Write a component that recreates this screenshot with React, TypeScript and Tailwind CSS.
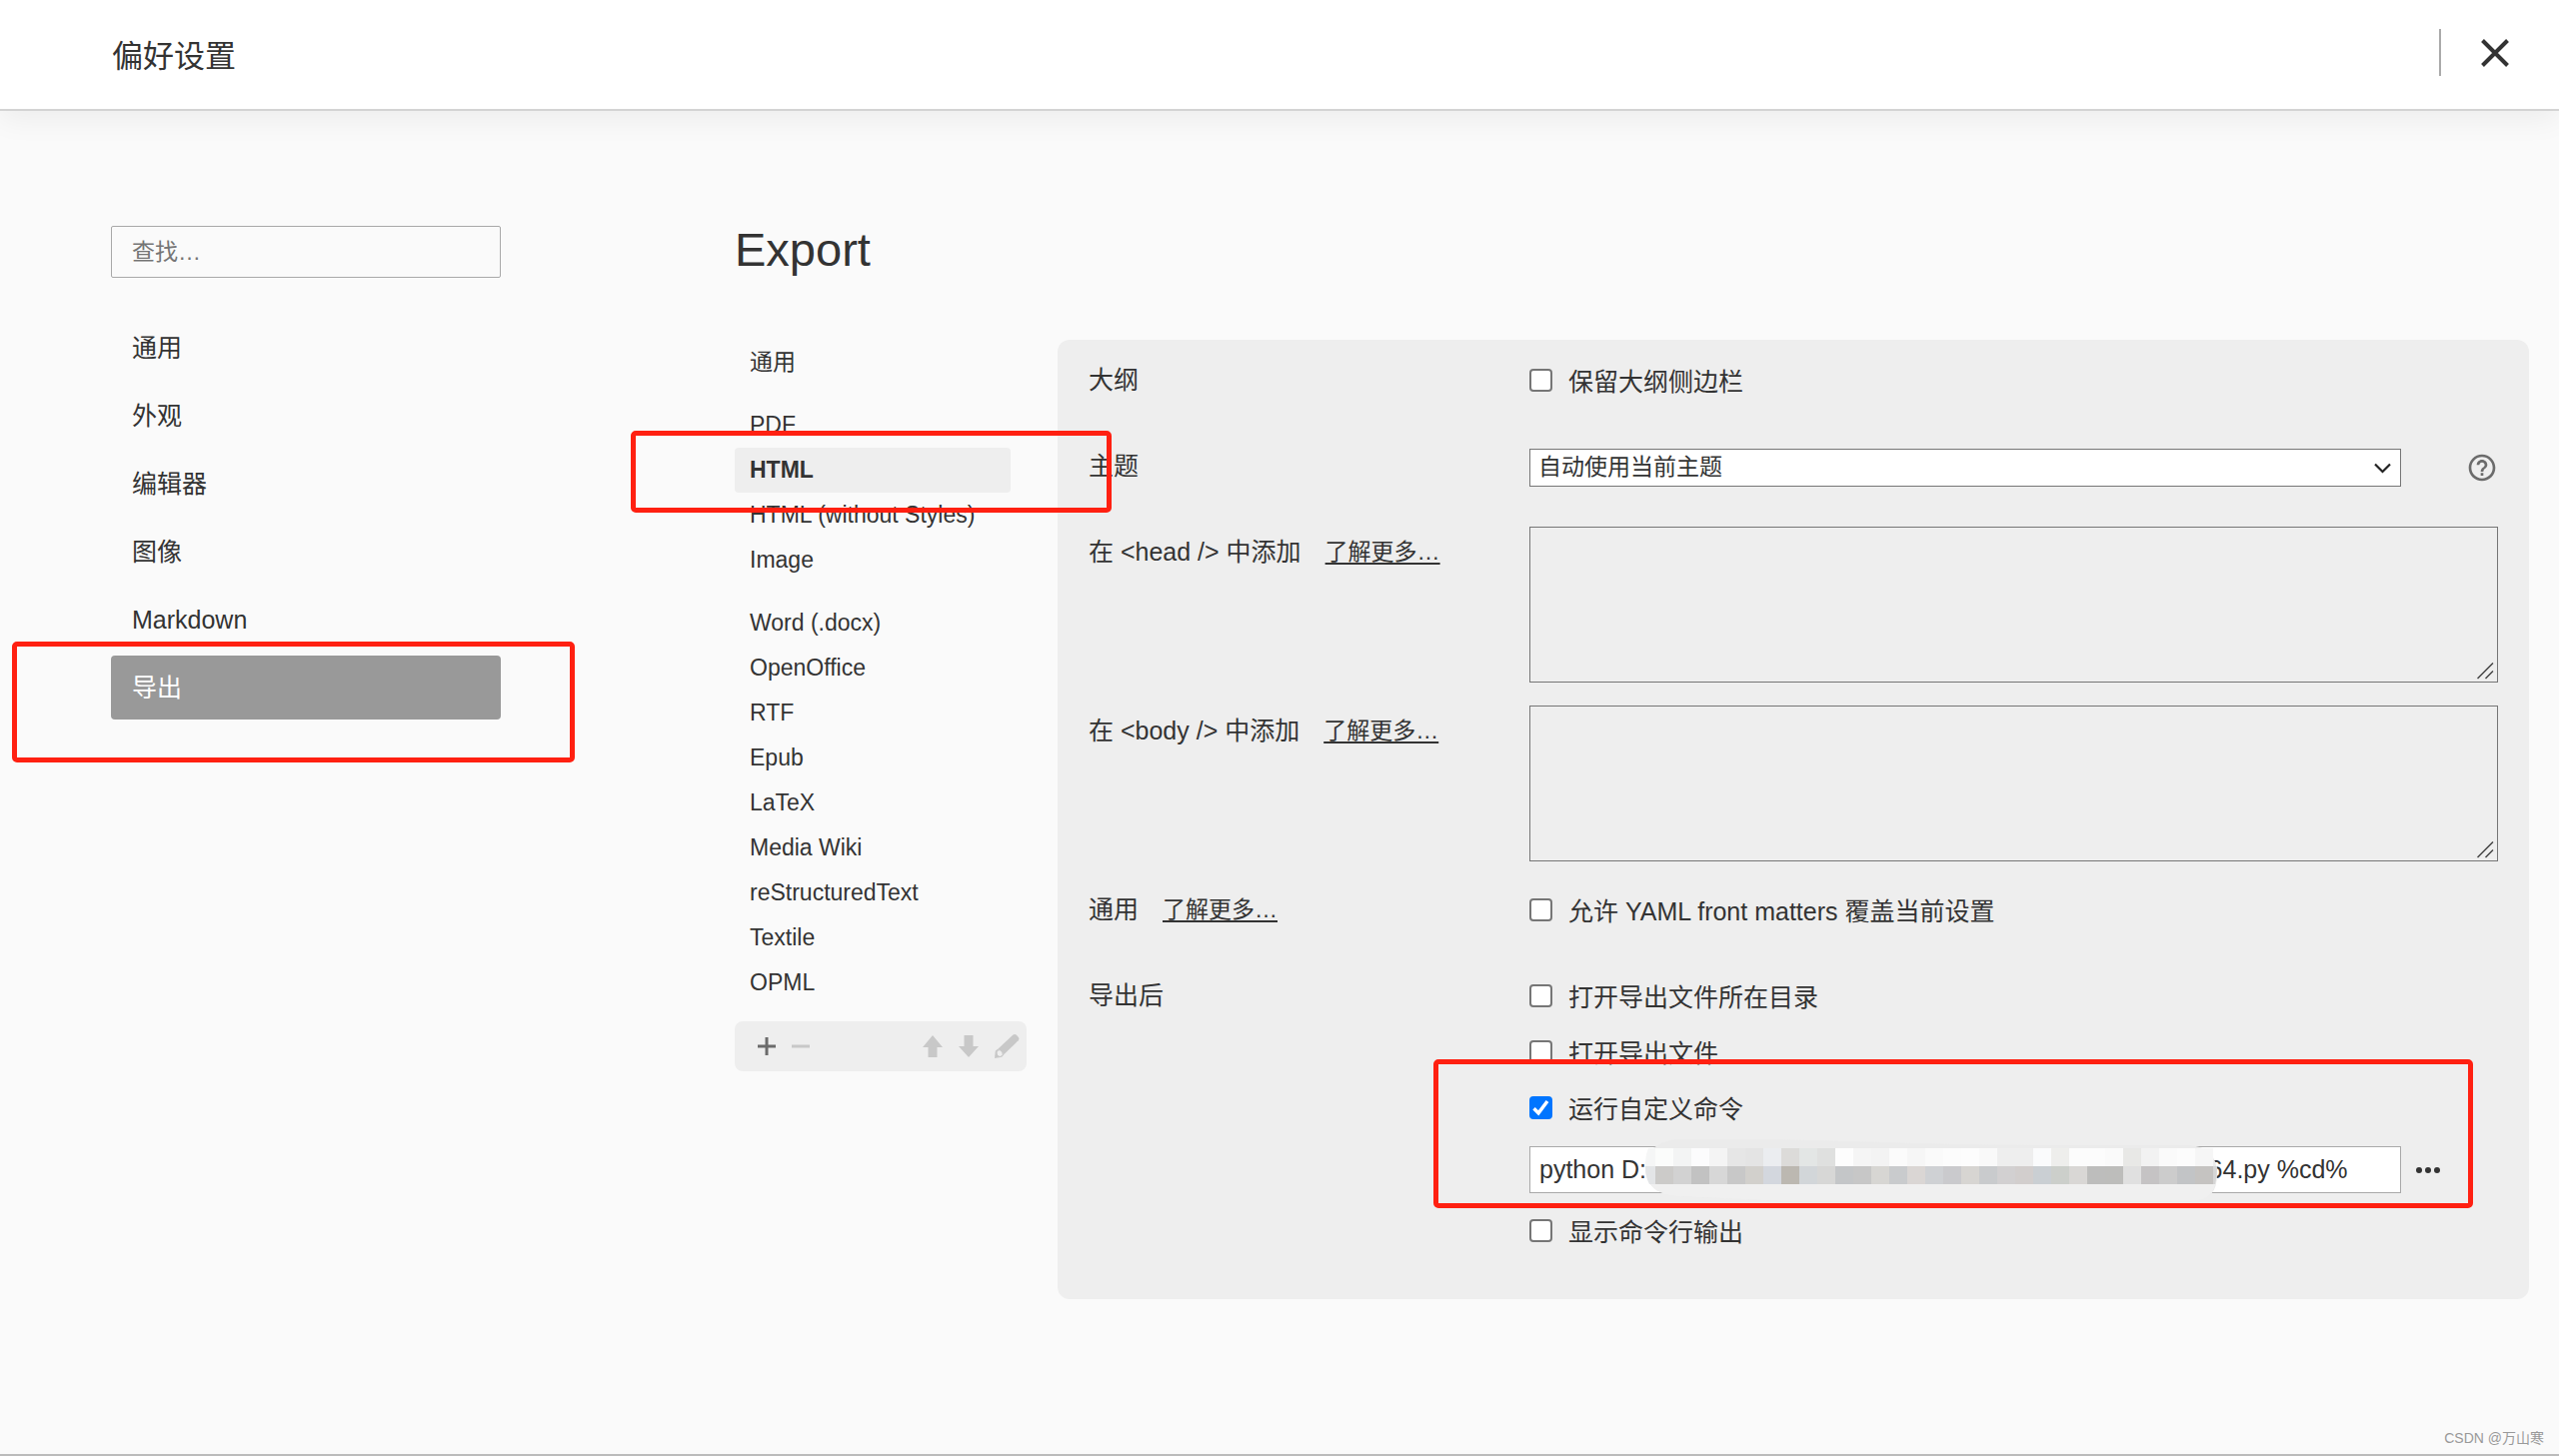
import React, { useState } from 'react';
import { MdHelpOutline } from 'react-icons/md';

const MENU = ['通用', '外观', '编辑器', '图像', 'Markdown', '导出'];

const EXPORT_GROUPS = [
    ['通用'],
    ['PDF', 'HTML', 'HTML (without Styles)', 'Image'],
    ['Word (.docx)', 'OpenOffice', 'RTF', 'Epub', 'LaTeX', 'Media Wiki', 'reStructuredText', 'Textile', 'OPML'],
];

// Colours of the mosaic that hides the middle of the command
const MOSAIC = [
    ['#fbfcfb', '#f3f4f4', '#fcfcfd', '#f4f4f4', '#e6e6e6', '#e4e4e4', '#ebedf0', '#dcdbd9', '#e3e6e5', '#dfe0df', '#fdfdfd', '#f5f5f5', '#f3f3f3', '#fbfbfb', '#f6f6f6', '#fafafa', '#fcfcfc', '#fdfdfd', '#f9f9f9', '#eeeeee', '#eeeeee', '#fafbfc', '#eeeeec', '#fcfcfc', '#fcfcfc', '#fafafa', '#e8e8e6', '#f2f2f2', '#fafafa', '#fcfcfc', '#f6f6f6'],
    ['#cccbc9', '#d2d2d2', '#c2c2c2', '#d7d7d7', '#c8c8c8', '#d2d0cc', '#d3d7de', '#bcb8b1', '#d2d6d9', '#d7d7d6', '#c4c6c8', '#c7c7c7', '#d7d6d3', '#c9cbcd', '#dad6d4', '#cfd1d4', '#cacacd', '#d7d5d2', '#c9cbcd', '#d2d0d1', '#d2cecd', '#cacfd3', '#cccfcb', '#d9d7d5', '#bdbdbc', '#bdbdbb', '#e0e0e0', '#c5c3c4', '#cccccc', '#c2c4c6', '#c5c3c1'],
];

const COMMAND = 'python D:' + ' '.repeat(81) + '64.py %cd%';

const Highlight: React.FC<{ className: string }> = ({ className }) => (
    <div className={`absolute z-10 border-5 border-[#ff2011] rounded-[5px] pointer-events-none ${className}`} />
);

const Row: React.FC<{ label: string; link?: boolean; children: React.ReactNode }> = ({ label, link, children }) => (
    <div className="flex min-h-[86px] pt-[15px]">
        <div className="flex items-center gap-6 w-[441px] h-[38px] mt-1.5 shrink-0 whitespace-nowrap">
            <span>{label}</span>
            {link && <a href="#more" className="text-[23px] underline decoration-2 underline-offset-3">了解更多…</a>}
        </div>
        <div className="flex-1 min-w-0">{children}</div>
    </div>
);

const Check: React.FC<{ label: string; defaultChecked?: boolean }> = ({ label, defaultChecked }) => (
    <label className="flex items-center gap-4 h-[38px] w-fit">
        <input type="checkbox" defaultChecked={defaultChecked} className="peer sr-only" />
        <span className="flex items-center justify-center w-[23px] h-[23px] bg-white border-2 border-[#767676] rounded-[4px] text-transparent peer-checked:bg-[#0075ff] peer-checked:border-[#0075ff] peer-checked:text-white">
            <svg width="19" height="19" viewBox="0 0 19 19" fill="none" stroke="currentColor" strokeWidth="3.4">
                <path d="M2.5 10.2l4.6 4.6L16 3" />
            </svg>
        </span>
        <span className="mt-1">{label}</span>
    </label>
);

const Area: React.FC<{ label: string }> = ({ label }) => (
    <div className="relative pb-2">
        <textarea aria-label={label} className="block w-full h-[156px] bg-transparent border border-[#767676] resize-none p-2 outline-none" />
        <svg className="absolute right-1 bottom-[11px]" width="17" height="17" viewBox="0 0 17 17" stroke="#444" strokeWidth="1.5">
            <path d="M0.5 16L16 0.5M8.5 16L16 8.5" />
        </svg>
    </div>
);

const ExportToolbar = () => (
    <div className="flex items-center h-[50px] mt-4 pl-[21px] pr-[7px] bg-[#eee] rounded-lg text-[#c8c8c8]">
        <button aria-label="Add" className="text-[#6b6b6b]">
            <svg width="22" height="22" viewBox="0 0 22 22" stroke="currentColor" strokeWidth="3"><path d="M2 11h18M11 2v18" /></svg>
        </button>
        <button aria-label="Remove" className="ml-3">
            <svg width="22" height="22" viewBox="0 0 22 22" stroke="currentColor" strokeWidth="3"><path d="M2 11h18" /></svg>
        </button>
        <button aria-label="Move up" className="ml-auto">
            <svg width="22" height="22" viewBox="0 0 22 22" fill="currentColor"><path d="M11 0L21 12H15.500V22H6.500V12H1z" /></svg>
        </button>
        <button aria-label="Move down" className="ml-[14px]">
            <svg width="22" height="22" viewBox="0 0 22 22" fill="currentColor"><path d="M11 22L21 11H15.500V0H6.500V11H1z" /></svg>
        </button>
        <button aria-label="Edit" className="ml-[14px]">
            <svg width="26" height="26" viewBox="0 0 26 26" fill="currentColor">
                <path d="M19.500 1.500q1.800-1.300 3.400.2l2 2.300q1.100 1.700-.2 3.200L10.500 21 4.500 15.500z" />
                <path d="M1.800 17.500L4.500 15.500 10.500 21 8.200 23.800 1 25z" />
                <path d="M3.600 18.600Q5.500 16 7.200 18T8.600 21.300Q7.500 23.300 5.500 22.800T3.600 18.600z" fill="#eee" />
            </svg>
        </button>
    </div>
);

const Mosaic = () => (
    <svg className="absolute left-[115px] -top-[7px] pointer-events-none" width="574" height="62" viewBox="0 0 574 62">
        <path d="M34 0H120C220 2 300 6 400 6H545Q573 8 573 35Q573 48 567 55Q558 62 545 62H140L34 57Q1 54 1 29Q1 3 34 0z" fill="#ebebeb" />
        <path d="M6 45H571Q568 62 545 62H140L34 57Q12 55 6 45z" fill="#f0f0f0" />
        <path d="M4 9H11V27H1Q1 16 4 9z" fill="#f5f6f6" />
        <path d="M1 27H11V45H5Q1 37 1 27z" fill="#e3e5e7" />
        {MOSAIC.map((row, y) => row.map((fill, x) => (
            <rect key={`${x}-${y}`} x={11 + x * 18} y={9 + y * 18} width="18" height="18" fill={fill} shapeRendering="crispEdges" />
        )))}
        <path d="M569 27h4q0 10-2 18h-2z" fill="#d6d6d6" />
    </svg>
);

const Sidebar: React.FC<{ active: string; onSelect: (name: string) => void }> = ({ active, onSelect }) => (
    <aside className="w-[390px] shrink-0">
        <input
            type="search"
            aria-label="查找"
            placeholder="查找…"
            className="block w-full h-[52px] px-5 text-[23px] bg-transparent border border-[#a9a9a9] rounded-[2px] outline-none placeholder:text-[#757575]"
        />
        <ul className="flex flex-col gap-1 mt-[38px]">
            {MENU.map(name => (
                <li key={name} className="relative">
                    <button
                        onClick={() => onSelect(name)}
                        className={`flex items-center w-full h-16 px-[21px] rounded-[4px] ${active === name ? 'bg-[#999] text-white' : ''}`}
                    >
                        {name}
                    </button>
                    {name === '导出' && <Highlight className="-left-[99px] -right-[74px] -top-[14px] -bottom-[43px]" />}
                </li>
            ))}
        </ul>
    </aside>
);

const ExportList = () => {
    const [format, setFormat] = useState('HTML');

    return (
        <div className="w-[292px] shrink-0 text-[23px]">
            <div className="flex flex-col gap-[18px]">
                {EXPORT_GROUPS.map(group => (
                    <ul key={group[0]} className="w-[276px]">
                        {group.map(name => (
                            <li key={name} className="relative">
                                <button
                                    onClick={() => setFormat(name)}
                                    className={`flex items-center w-full h-[45px] px-[15px] pb-0.5 rounded-[4px] whitespace-nowrap ${format === name ? 'bg-[#eee] font-bold' : ''}`}
                                >
                                    {name}
                                </button>
                                {name === 'HTML' && <Highlight className="-left-[104px] -right-[101px] -top-[17px] -bottom-5" />}
                            </li>
                        ))}
                    </ul>
                ))}
            </div>
            <ExportToolbar />
        </div>
    );
};

const HtmlOptions = () => (
    <section className="flex-1 min-w-0 px-[31px] pb-[50px] bg-[#eee] rounded-[12px]">
        <Row label="大纲">
            <div className="pt-1.5"><Check label="保留大纲侧边栏" /></div>
        </Row>
        <Row label="主题">
            <div className="flex items-center pt-2">
                <div className="relative flex-1">
                    <select aria-label="主题" className="block w-full h-[38px] pl-2 pb-0.5 text-[23px] leading-[34px] bg-white border border-[#767676] appearance-none outline-none">
                        <option>自动使用当前主题</option>
                    </select>
                    <svg className="absolute right-[10px] top-[14px] pointer-events-none" width="17" height="12" viewBox="0 0 17 12" fill="none" stroke="#222" strokeWidth="2.2">
                        <path d="M1 1.500l7.500 7.500L16 1.500" />
                    </svg>
                </div>
                <button aria-label="Help" className="w-[97px] flex justify-end text-[#6b6b6b]">
                    <MdHelpOutline size={32} />
                </button>
            </div>
        </Row>
        <Row label="在 <head /> 中添加" link><Area label="head" /></Row>
        <Row label="在 <body /> 中添加" link><Area label="body" /></Row>
        <Row label="通用" link>
            <div className="pt-1.5"><Check label="允许 YAML front matters 覆盖当前设置" /></div>
        </Row>
        <Row label="导出后">
            <div className="flex flex-col gap-[18px] pt-1.5">
                <Check label="打开导出文件所在目录" />
                <Check label="打开导出文件" />
                <div className="relative">
                    <Check label="运行自定义命令" defaultChecked />
                    <div className="relative flex items-center mt-5">
                        <input
                            type="text"
                            aria-label="运行自定义命令"
                            defaultValue={COMMAND}
                            className="flex-1 min-w-0 h-[47px] px-[9px] bg-white border border-[#a9a9a9] outline-none"
                        />
                        <button aria-label="More" className="w-[97px] pl-[15px]">
                            <svg width="24" height="6" viewBox="0 0 24 6" fill="#333">
                                <circle cx="3" cy="3" r="3" />
                                <circle cx="12" cy="3" r="3" />
                                <circle cx="21" cy="3" r="3" />
                            </svg>
                        </button>
                        <Mosaic />
                    </div>
                    <Highlight className="-left-24 right-[25px] -top-[29px] -bottom-[15px]" />
                </div>
                <Check label="显示命令行输出" />
            </div>
        </Row>
    </section>
);

export default function App() {
    const [active, setActive] = useState('导出');

    return (
        <div className="relative flex flex-col min-h-screen bg-[#fafafa] text-[#333] text-[25px] leading-[38px] font-['Liberation_Sans','Noto_Sans_CJK_SC',sans-serif]">
            <header className="flex items-center justify-between h-[111px] pl-28 pr-[50px] bg-white border-b-2 border-[#d3d3d3] shadow-[0_8px_28px_rgba(0,0,0,0.06)]">
                <h1 className="pt-1 text-[31px]">偏好设置</h1>
                <div className="flex items-center h-[47px] pl-10 mb-1 border-l-2 border-[#aaa]">
                    <button aria-label="Close">
                        <svg width="28" height="28" viewBox="0 0 28 28" stroke="#333" strokeWidth="4">
                            <path d="M1.500 1.500l25 25M26.500 1.500l-25 25" />
                        </svg>
                    </button>
                </div>
            </header>

            <main className="flex flex-1 pt-[115px] pl-[111px] pr-[30px]">
                <Sidebar active={active} onSelect={setActive} />
                <div className="flex-1 min-w-0 ml-[234px]">
                    <h2 className="text-[47px] leading-[48px] mb-[66px]">Export</h2>
                    <div className="flex items-start gap-[31px]">
                        <ExportList />
                        <HtmlOptions />
                    </div>
                </div>
            </main>

            <footer className="flex justify-end pr-[15px] pb-1 text-sm leading-6 text-[#999] border-b-2 border-[#bbb]">
                CSDN @万山寒
            </footer>
        </div>
    );
}
